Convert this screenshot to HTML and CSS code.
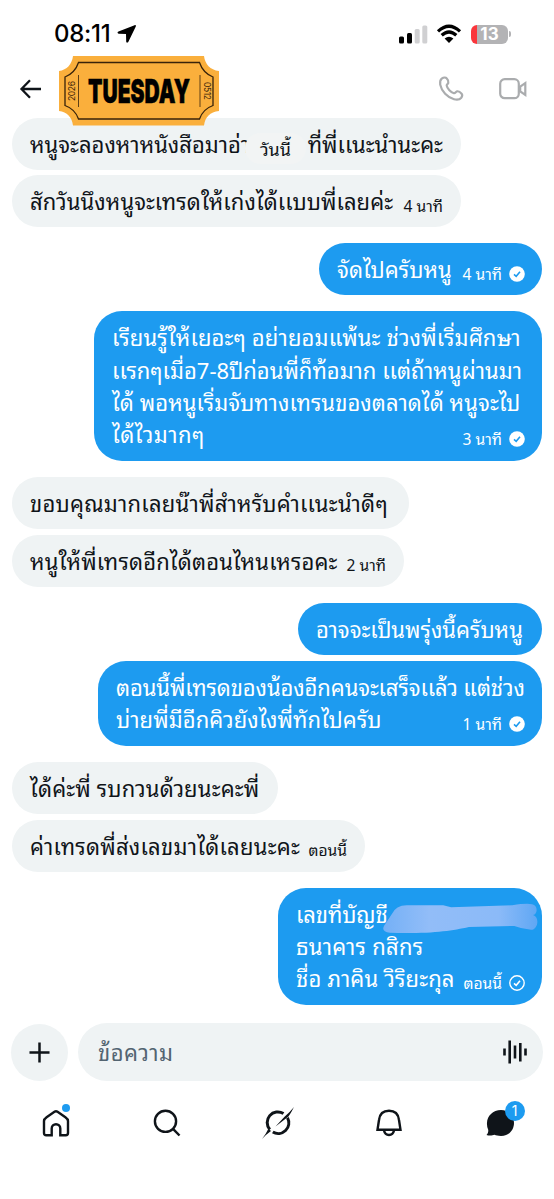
FILE: index.html
```html
<!DOCTYPE html>
<html lang="th">
<head>
<meta charset="utf-8">
<title>ข้อความ</title>
<link rel="stylesheet" href="styles.css">
</head>
<body>
<div class="phone">
  <header class="status">
    <span class="clock">08:11</span>
    <svg class="locate" viewBox="0 0 20 20"><path d="M17.600 1.200 1.500 7.600c-1.400.6-1.200 2 .2 2.100l7.300.200.200 7.500c.1 1.400 1.600 1.700 2.200.300L18.800 2.400c.4-.900-.3-1.600-1.200-1.200z"/></svg>
    <svg class="signal" viewBox="0 0 30 19"><rect x="0" y="11.500" width="5" height="7" rx="1.500"/><rect x="8" y="8" width="5" height="10.500" rx="1.500"/><g class="dim"><rect x="15.700" y="4" width="5" height="14.500" rx="1.500"/><rect x="23.300" y="0.500" width="5" height="18" rx="1.500"/></g></svg>
    <svg class="wifi" viewBox="0 0 26 20"><g class="arc"><path d="M2 7.400Q13-2.800 24 7.400"/><path d="M5.700 11.300Q13 4.600 20.300 11.300"/></g><path d="M8.600 14.500Q13 10.800 17.400 14.500L13 19z"/></svg>
    <div class="battery"><span>13</span></div><i class="cap"></i>
  </header>
  <div class="topbar">
    <svg class="back" viewBox="0 0 22 20"><path d="M21 10H2M10 1.200 1.500 10 10 18.800"/></svg>
    <svg class="call" viewBox="0 0 24 24"><path d="M7.600 1.200c.9.900 1.900 3.400 1.700 4.500-.2 1.200-1.800 1.600-1.600 3 .4 2.700 4.300 6.800 7.200 7.500 1.500.3 1.900-1.600 3.200-1.900 1.300-.2 3.600 1.300 4.500 2.400.6.800.6 2.800-.3 4-1.500 1.800-4.400 2.300-7.300 1.500C8.500 20.400 2.500 14.200 1.200 7.600.8 4.700 1.300 2.600 3 1.400 4.400.5 6.800.3 7.600 1.200z"/></svg>
    <svg class="video" viewBox="0 0 28 22"><rect x="1.200" y="1.200" width="18.600" height="19" rx="4.500"/><path d="M21.200 8.600 26.300 5v12l-5.100-3.600z"/></svg>
    <svg class="ticket" viewBox="0 0 161 70">
      <path fill="#faaf3c" d="M15 0H146C147 8 152 14 161 15V55C152 56 147 61 146 69.500H15C14 61 9 56 1 55V15C9 14 14 8 15 0z"/>
      <path fill="none" stroke="#38230a" stroke-width="1.300" d="M20.500 6.500H141.500Q145 17 155 21V49.500Q145 53 141.500 63H20.500Q17 53 7 49.500V21Q17 17 20.500 6.500z"/>
      <path stroke="#38230a" stroke-width=".8" d="M20.500 19V51M142 19V51"/>
      <text class="day" x="30" y="47.300" textLength="102" lengthAdjust="spacingAndGlyphs">TUESDAY</text>
      <text class="tiny" transform="translate(17 45) rotate(-90)" textLength="20">2026</text>
      <text class="tiny" transform="translate(145.500 26) rotate(90)" textLength="18">0512</text>
    </svg>
  </div>

  <main class="chat">
    <div class="msg in m1"><p><span>หนูจะลองหาหนังสือมาอ่า</span><span class="end">ที่พี่เเนะนำนะคะ</span></p><b class="today">วันนี้</b></div>
    <div class="msg in m2"><p><span class="s1">สักวันนึงหนูจะเทรดให้เก่งได้เเบบพี่เลยค่ะ</span><time>4 นาที</time></p></div>
    <div class="msg out m3"><p><span class="s1">จัดไปครับหนู</span><time>4 นาที</time><svg class="tick" viewBox="0 0 16 16"><circle cx="8" cy="8" r="7.800"/><path d="M5 8.300 7.200 10.300 11 5.800"/></svg></p></div>
    <div class="msg out m4">
      <p><span class="s2">เรียนรู้ให้เยอะๆ อย่ายอมแพ้นะ ช่วงพี่เริ่มศึกษา</span></p>
      <p><span>เเรกๆเมื่อ7-8ปีก่อนพี่ก็ท้อมาก เเต่ถ้าหนูผ่านมา</span></p>
      <p><span class="s1">ได้ พอหนูเริ่มจับทางเทรนของตลาดได้ หนูจะไป</span></p>
      <p><span class="s4">ได้ไวมากๆ</span><time>3 นาที</time><svg class="tick" viewBox="0 0 16 16"><circle cx="8" cy="8" r="7.800"/><path d="M5 8.300 7.200 10.300 11 5.800"/></svg></p>
    </div>
    <div class="msg in m5"><p><span class="s3">ขอบคุณมากเลยน๊าพี่สำหรับคำเเนะนำดีๆ</span></p></div>
    <div class="msg in m6"><p><span class="s2">หนูให้พี่เทรดอีกได้ตอนไหนเหรอคะ</span><time>2 นาที</time></p></div>
    <div class="msg out m7"><p><span>อาจจะเป็นพรุ่งนี้ครับหนู</span></p></div>
    <div class="msg out m8">
      <p><span class="tight">ตอนนี้พี่เทรดของน้องอีกคนจะเสร็จเเล้ว แต่ช่วง</span></p>
      <p><span class="s1">บ่ายพี่มีอีกคิวยังไงพี่ทักไปครับ</span><time>1 นาที</time><svg class="tick" viewBox="0 0 16 16"><circle cx="8" cy="8" r="7.800"/><path d="M5 8.300 7.200 10.300 11 5.800"/></svg></p>
    </div>
    <div class="msg in m9"><p><span class="s2">ได้ค่ะพี่ รบกวนด้วยนะคะพี่</span></p></div>
    <div class="msg in m10"><p><span class="s3">ค่าเทรดพี่ส่งเลขมาได้เลยนะคะ</span><time>ตอนนี้</time></p></div>
    <div class="msg out m11">
      <p><span class="tight">เลขที่บัญชี</span></p>
      <p><span class="s3">ธนาคาร กสิกร</span></p>
      <p><span class="s2">ชื่อ ภาคิน วิริยะกุล</span><time>ตอนนี้</time><svg class="tick open" viewBox="0 0 16 16"><circle cx="8" cy="8" r="7.200"/><path d="M5 8.300 7.200 10.300 11 5.800"/></svg></p>
      <svg class="smudge" viewBox="0 0 158 34"><defs><linearGradient id="g" x1="0" x2="1"><stop offset="0" stop-color="#74b0f6"/><stop offset=".3" stop-color="#92bdf8"/><stop offset=".75" stop-color="#8bbaf8"/><stop offset="1" stop-color="#5fa7f4"/></linearGradient></defs><path fill="url(#g)" d="M10 12Q14 3 25 3H62L70 5 132 3Q146 1 152 2C158 3 158 12 153 13C160 15 158 28 151 28Q142 27 134 24L88 25C70 29 50 32 8 31Q-1 30 2 24Z"/></svg>
    </div>
  </main>

  <div class="composer">
    <div class="plus"><svg viewBox="0 0 22 22"><path d="M11 .5V21.500M.5 11H21.500"/></svg></div>
    <div class="field"><span class="s4">ข้อความ</span><svg viewBox="0 0 24 24"><path d="M1.500 8.500V15.500M6.700 .500V23.500M12 5.500V18.500M17.300 3V21.500M22.500 8.500V15.500"/></svg></div>
  </div>

  <nav class="tabs">
    <a><svg viewBox="0 0 28 28"><path d="M4.600 8.200 12.800 2.600Q14 1.900 15.200 2.600L23.400 8.200Q26 10 26 12V24Q26 26.200 23.800 26.200H18.300V19.500A4.300 4.300 0 0 0 9.700 19.500V26.200H4.200Q2 26.200 2 24V12Q2 10 4.600 8.200z"/></svg><i class="dot"></i></a>
    <a><svg viewBox="0 0 28 28"><circle cx="12.500" cy="12.300" r="10.600"/><path d="M20 19.800 26.500 26.500"/></svg></a>
    <a><svg class="grok" viewBox="0 0 32 32"><path class="ring" d="M21.500 6.600A10.600 10.600 0 0 0 7.800 22.500M25.500 10.800A10.600 10.600 0 0 1 10.800 25"/><path class="slash" d="M32 0Q29 6 26.500 9.500L13.500 19.500 22.500 9.800Q28 5 32 0zM0 32Q4 27 6.500 21.500L9 24Q4 27.500 0 32z"/></svg></a>
    <a><svg viewBox="0 0 28 28"><path d="M2.500 20.800 4 11C4.700 5 8.500 1.800 14 1.800S23.300 5 24 11L25.500 20.800zM9 21.500Q10 26 14 26T19 21.500"/></svg></a>
    <a><svg class="chatico" viewBox="0 0 28 28"><path d="M15 1C23 1 28 7 28 14S23 27 15 27C12 27 10 26.300 8.500 25.800 6.500 26.700 3 27 .5 26 2 24.500 2.500 22.500 2.200 20.800A14 14 0 0 1 1 14C1 7 7 1 15 1z"/></svg><b class="badge">1</b></a>
  </nav>
</div>
</body>
</html>
```
FILE: styles.css
```css
* { box-sizing: border-box; }
body { margin: 0; background: #fff; color: #0f1419; font-family: "Noto Sans Thai Looped", "Loma", "Noto Sans Thai", "Liberation Sans", sans-serif; }
svg { display: block; flex: none; overflow: visible; }
.phone { width: 554px; height: 1199px; overflow: hidden; display: flex; flex-direction: column; }

.status { height: 58px; padding: 10px 0 0 54px; display: flex; align-items: center; color: #000; }
.clock { font: 500 24px/28px Inter, sans-serif; letter-spacing: -.3px; width: 63px; white-space: nowrap; }
.locate { width: 20px; height: 20px; }
.signal { width: 30px; height: 19px; margin-left: 262px; }
.signal .dim { fill: #d0d0d2; }
.wifi { width: 26px; height: 20px; margin-left: 7px; }
.wifi .arc { fill: none; stroke: #000; stroke-width: 3.2; }
.battery { width: 37px; height: 19px; margin-left: 9px; border-radius: 6px; background: linear-gradient(90deg, #f9363c 6px, #b3b3b5 6px); color: #fff; font: 700 17px/19px Inter, sans-serif; text-align: center; }
.cap { width: 2px; height: 6px; margin-left: 1px; border-radius: 0 2px 2px 0; background: #b3b3b5; }

.topbar { height: 60px; display: flex; align-items: center; padding: 2px 27px 0 20px; position: relative; z-index: 2; }
.back { width: 22px; height: 20px; fill: none; stroke: #0f1419; stroke-width: 2.300; }
.call, .video { fill: none; stroke: #aaacae; stroke-width: 2.200; }
.call { width: 24px; height: 24px; margin-left: auto; }
.video { width: 28px; height: 22px; margin-left: 36px; }
.ticket { position: absolute; left: 58px; top: -2px; width: 161px; height: 70px; }
.day { font: 900 33px Inter, sans-serif; stroke: #000; stroke-width: .5px; }
.tiny { font: 400 8.500px Inter, sans-serif; fill: #38230a; }

.chat { height: 886.600px; margin-top: -.4px; padding: 0 12px; display: flex; flex-direction: column; align-items: flex-start; }
.msg { position: relative; padding: 9px 18px 10px; border-radius: 26px; flex: none; }
.msg p { margin: 0; height: 32.300px; display: flex; align-items: center; white-space: nowrap; font-size: 22px; line-height: 32px; }
.in { background: #eff3f4; height: 52px; }
.out { background: #1d9bf0; color: #fff; align-self: flex-end; border-radius: 28px; }
.s1 { letter-spacing: .07px; }
.s2 { letter-spacing: .15px; }
.s3 { letter-spacing: .24px; }
.s4 { letter-spacing: .5px; }
.tight { letter-spacing: -.1px; }
.msg time { font-size: 15.600px; margin-left: auto; padding-top: 9px; }
.tick { width: 16px; height: 16px; margin: 11px -1px 0 7px; fill: #fff; }
.tick path { fill: none; stroke: #1d9bf0; stroke-width: 1.600; }
.tick.open { fill: none; stroke: #fff; stroke-width: 1.400; }
.tick.open path { stroke: #fff; }
.end { margin-left: auto; }
.today { position: absolute; left: 233px; top: 15px; width: 61px; height: 31px; border-radius: 16px; background: #f2f4f4; font-weight: 400; font-size: 18px; line-height: 31px; text-align: center; }
.m1 { width: 449px; }
.m2 { width: 449px; margin-top: 5.500px; }
.m3 { width: 223px; height: 52px; margin-top: 16px; }
.m4 { width: 448px; height: 150px; margin-top: 16px; }
.m5 { width: 397px; margin-top: 15.500px; }
.m6 { width: 392px; margin-top: 6px; }
.m7 { width: 244px; height: 52px; margin-top: 16px; }
.m8 { width: 444px; height: 85px; margin-top: 6px; }
.m9 { width: 266px; margin-top: 16px; }
.m10 { width: 353px; margin-top: 6px; }
.m11 { width: 264px; height: 117px; margin-top: 16px; }
.smudge { position: absolute; left: 104px; top: 14px; width: 156px; height: 34px; filter: blur(.6px); }

.composer { height: 96px; padding: 19px 11px 0; display: flex; align-items: flex-start; gap: 10px; }
.plus { width: 57px; height: 57px; margin-top: 1px; border-radius: 50%; background: #eff3f4; display: grid; place-items: center; }
.plus svg { width: 21px; height: 21px; stroke: #0f1419; stroke-width: 2.600; margin-right: 1px; }
.field { flex: 1; height: 58px; border-radius: 29px; background: #eff3f4; display: flex; align-items: center; justify-content: space-between; padding: 0 16px 2px 20px; color: #536471; font-size: 22px; }
.field svg { width: 24px; height: 24px; stroke: #0f1419; stroke-width: 2.600; margin-top: 2px; }

.tabs { height: 46px; display: grid; grid-template-columns: repeat(5, 111px); justify-content: center; align-items: center; margin-left: 2px; }
.tabs a { position: relative; display: grid; place-items: center; }
.tabs svg { width: 28px; height: 28px; fill: none; stroke: #0f1419; stroke-width: 2.400; }
.tabs .grok { width: 32px; height: 32px; }
.tabs .grok .ring { stroke-width: 3; }
.tabs .grok .slash, .tabs .chatico { fill: #0f1419; stroke: none; }
.dot { position: absolute; left: 61px; top: -5px; width: 8px; height: 8px; border-radius: 50%; background: #1d9bf0; }
.badge { position: absolute; left: 60px; top: -8px; width: 20px; height: 20px; border-radius: 50%; background: #1d9bf0; color: #fff; font: 400 14px/20px Inter, sans-serif; text-align: center; }
```
